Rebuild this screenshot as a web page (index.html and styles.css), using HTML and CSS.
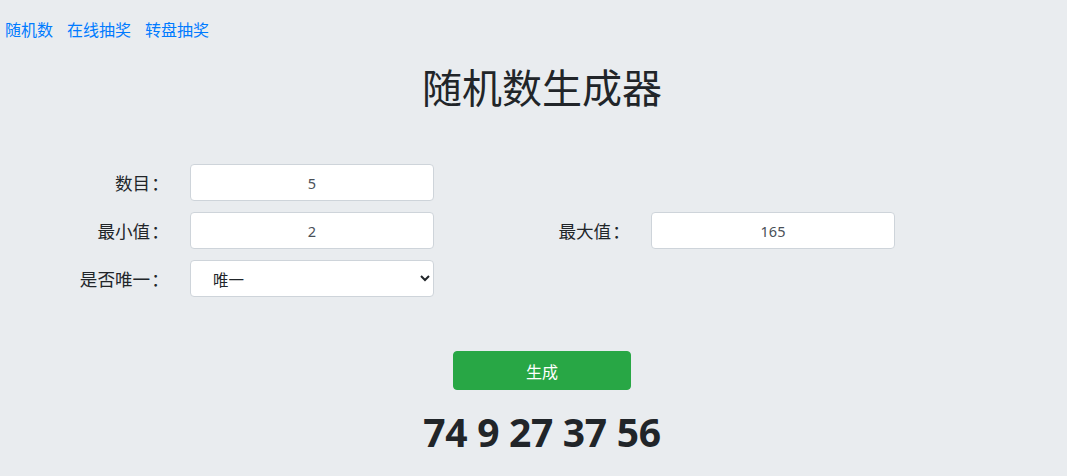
FILE: index.html
```html
<!DOCTYPE html>
<html lang="zh">
<head>
<meta charset="utf-8">
<title>随机数生成器</title>
<link rel="stylesheet" href="styles.css">
</head>
<body>
<nav class="nav">
  <a href="#">随机数</a>
  <a href="#">在线抽奖</a>
  <a href="#">转盘抽奖</a>
</nav>
<main class="main">
  <h1 class="title">随机数生成器</h1>
  <form class="form-grid">
    <label class="label">数目<span class="colon">：</span></label>
    <input class="field" type="text" value="5">
    <span></span><span></span>
    <label class="label">最小值<span class="colon">：</span></label>
    <input class="field" type="text" value="2">
    <label class="label">最大值<span class="colon">：</span></label>
    <input class="field" type="text" value="165">
    <label class="label">是否唯一<span class="colon">：</span></label>
    <select class="field select"><option>唯一</option><option>不唯一</option></select>
    <span></span><span></span>
  </form>
  <div class="actions">
    <button class="btn" type="button">生成</button>
  </div>
  <div class="result">74 9 27 37 56</div>
</main>
</body>
</html>
```
FILE: styles.css
```css
html, body {
  margin: 0;
  padding: 0;
}
body {
  background: #e9ecef;
  color: #212529;
  font-family: "Noto Sans", "Noto Sans CJK SC", sans-serif;
  font-size: 16px;
}
.nav {
  display: flex;
  gap: 14px;
  padding: 17px 5px 0;
  line-height: 24px;
}
.nav a {
  color: #007bff;
  text-decoration: none;
  font-family: "Noto Sans CJK SC", sans-serif;
}
.title {
  margin: 21px 0 0;
  padding-left: 17px;
  text-align: center;
  font-family: "Noto Sans CJK SC", sans-serif;
  font-weight: 400;
  font-size: 40px;
  line-height: 48px;
  color: #212529;
}
.form-grid {
  display: grid;
  grid-template-columns: 160px 244px 157px 244px;
  column-gap: 30px;
  row-gap: 11px;
  margin-top: 54px;
}
.label {
  text-align: right;
  align-self: center;
  font-family: "Noto Sans CJK SC", sans-serif;
  font-size: 17.6px;
  color: #212529;
  white-space: nowrap;
}
.colon {
  font-feature-settings: "halt";
  margin-left: 1px;
}
.field {
  box-sizing: border-box;
  height: 37px;
  border: 1px solid #ced4da;
  border-radius: 4px;
  background: #fff;
  color: #495057;
  font-family: "Noto Sans", "Noto Sans CJK SC", sans-serif;
  font-size: 14.5px;
  text-align: center;
  padding: 0 12px;
  outline: none;
}
.select {
  text-align: left;
  padding-left: 18px;
  font-family: "Noto Sans CJK SC", sans-serif;
  font-size: 15.5px;
  color: #212529;
}
.actions {
  display: flex;
  justify-content: center;
  margin-top: 54px;
  padding-left: 17px;
}
.btn {
  width: 178px;
  height: 39px;
  background: #28a745;
  border: 1px solid #28a745;
  border-radius: 4px;
  color: #fff;
  font-family: "Noto Sans CJK SC", sans-serif;
  font-size: 16px;
  padding: 0;
}
.result {
  margin-top: 18px;
  padding-left: 17px;
  text-align: center;
  font-family: "Noto Sans", sans-serif;
  font-weight: 700;
  font-size: 39px;
  line-height: 48px;
  letter-spacing: -0.3px;
  color: #212529;
}
```
